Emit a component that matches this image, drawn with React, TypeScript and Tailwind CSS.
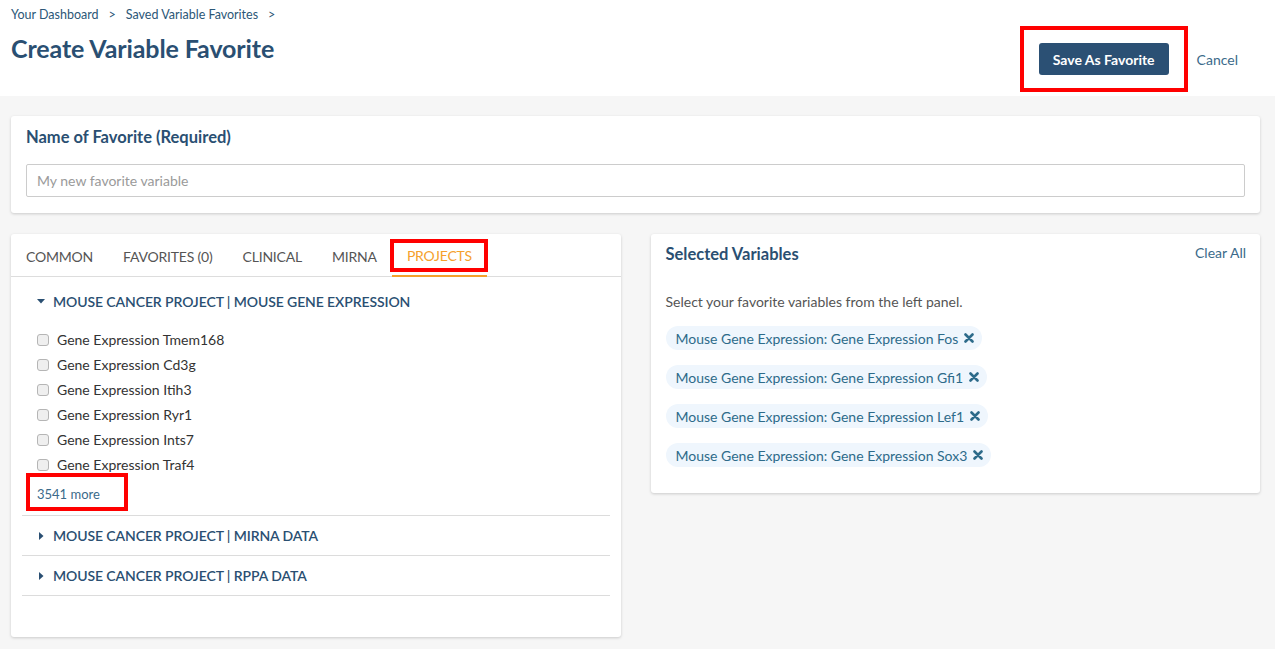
import { useState } from 'react';

const FONT = { fontFamily: 'Lato, "Open Sans", Arial, sans-serif' };

const TABS = ['Common', 'Favorites (0)', 'Clinical', 'miRNA', 'Projects'];

const GENES = [
  'Gene Expression Tmem168',
  'Gene Expression Cd3g',
  'Gene Expression Itih3',
  'Gene Expression Ryr1',
  'Gene Expression Ints7',
  'Gene Expression Traf4',
];

const SELECTED = [
  'Mouse Gene Expression: Gene Expression Fos',
  'Mouse Gene Expression: Gene Expression Gfi1',
  'Mouse Gene Expression: Gene Expression Lef1',
  'Mouse Gene Expression: Gene Expression Sox3',
];

const Caret = ({ open }: { open?: boolean }) => (
  <svg width="8" height="8" viewBox="0 0 8 8" className="shrink-0">
    {open
      ? <path d="M0 2h8L4 6.5z" fill="#2a4f72" />
      : <path d="M2 0v8l4.5-4z" fill="#2a4f72" />}
  </svg>
);

const RemoveIcon = () => (
  <svg width="10" height="10" viewBox="0 0 10 10" className="shrink-0">
    <path d="M1.5 1.5l7 7M8.5 1.5l-7 7" stroke="#2d6b8a" strokeWidth="2.6" strokeLinecap="round" />
  </svg>
);

const GroupRow = ({ title }: { title: string }) => (
  <div className="flex items-center gap-[8px] h-[40px] pl-[15px] border-b border-[#dcdcdc] text-[14px] text-[#2a4f72] font-semibold tracking-[-0.1px]">
    <Caret />
    <span>{title}</span>
  </div>
);

export default function App() {
  const [active, setActive] = useState('Projects');
  const [chips, setChips] = useState(SELECTED);

  return (
    <div className="min-h-[649px] bg-[#f6f6f6]" style={FONT}>
      <header className="bg-white h-[96px] flex justify-between pl-[11px] pr-[37px]">
        <div className="pt-[6px]">
          <nav className="flex gap-[10px] text-[12.5px] text-[#2c5777]">
            <span>Your Dashboard</span>
            <span>&gt;</span>
            <span>Saved Variable Favorites</span>
            <span>&gt;</span>
          </nav>
          <h1 className="mt-[5px] text-[25px] font-bold text-[#2a4f72] tracking-[-0.1px]">Create Variable Favorite</h1>
        </div>
        <div className="flex items-center gap-[9px] pt-[26px] pb-[4px]">
          <div className="border-[4px] border-[#ff0000] px-[15px] py-[13px]">
            <button className="h-[32px] px-[14px] rounded-[3px] bg-[#2b5074] text-white text-[14px] font-bold">
              Save As Favorite
            </button>
          </div>
          <button className="text-[14px] text-[#3b6a8a]">Cancel</button>
        </div>
      </header>

      <main className="pl-[11px] pr-[15px] pt-[20px] pb-[12px] flex flex-col gap-[21px]">
        <section className="bg-white rounded-[3px] shadow-[0_1px_3px_rgba(0,0,0,0.18)] px-[15px] pt-[9px] pb-[16px]">
          <h2 className="text-[16.5px] leading-[24px] font-bold text-[#2a4f72]">Name of Favorite (Required)</h2>
          <input
            className="mt-[15px] w-full h-[33px] border border-[#cccccc] rounded-[2px] px-[10px] text-[14px] text-[#333] placeholder:text-[#9a9a9a] outline-none"
            placeholder="My new favorite variable"
          />
        </section>

        <div className="grid grid-cols-2 gap-[30px] items-start">
          <section className="bg-white rounded-[3px] shadow-[0_1px_3px_rgba(0,0,0,0.18)] h-[403px]">
            <div className="flex border-b border-[#dddddd] h-[43px]">
              {TABS.map((tab) => {
                const on = tab === active;
                return (
                  <button
                    key={tab}
                    onClick={() => setActive(tab)}
                    className={
                      on
                        ? 'relative px-[15px] text-[14px] tracking-[-0.2px] uppercase text-[#f5a12c] border-b-[2px] border-[#f5a12c] -mb-[1px] pt-[2px]'
                        : 'relative px-[15px] text-[14px] tracking-[-0.2px] uppercase text-[#555555] pt-[2px]'
                    }
                  >
                    {tab}
                    {on && (
                      <span className="absolute left-[-2px] right-[-1px] top-[5px] bottom-[3px] border-[4px] border-[#ff0000]" />
                    )}
                  </button>
                );
              })}
            </div>

            <div className="px-[11px]">
              <div className="border-b border-[#dcdcdc] pb-[3px]">
                <div className="flex items-center gap-[8px] h-[48px] pl-[15px] text-[14px] text-[#2a4f72] font-semibold tracking-[-0.1px]">
                  <Caret open />
                  <span>MOUSE CANCER PROJECT | MOUSE GENE EXPRESSION</span>
                </div>
                <ul className="pl-[15px] mt-[2px]">
                  {GENES.map((g) => (
                    <li key={g} className="flex items-center gap-[8px] h-[25px] text-[14px] text-[#333333]">
                      <span className="w-[12px] h-[12px] rounded-[3px] border border-[#b5b5b5] bg-[#efefef]" />
                      <span>{g}</span>
                    </li>
                  ))}
                </ul>
                <div className="relative h-[34px] flex items-center pl-[15px] mt-[1px]">
                  <span className="text-[13px] text-[#3b6a8a]">3541 more</span>
                  <span className="absolute left-[4px] top-[-5px] w-[102px] h-[38px] border-[4px] border-[#ff0000]" />
                </div>
              </div>
              <GroupRow title="MOUSE CANCER PROJECT | MIRNA DATA" />
              <GroupRow title="MOUSE CANCER PROJECT | RPPA DATA" />
            </div>
          </section>

          <section className="bg-white rounded-[3px] shadow-[0_1px_3px_rgba(0,0,0,0.18)] px-[15px] pt-[7px] pb-[26px]">
            <div className="flex justify-between items-start">
              <h2 className="text-[16.5px] leading-[24px] font-bold text-[#2a4f72] pt-[1px]">Selected Variables</h2>
              <button className="text-[14px] text-[#3b6a8a] -mr-[1px] pt-[1px]">Clear All</button>
            </div>
            <p className="mt-[25px] text-[14px] text-[#555555]">Select your favorite variables from the left panel.</p>
            <div className="mt-[14px] flex flex-col items-start gap-[15px]">
              {chips.map((c) => (
                <span key={c} className="flex items-center gap-[6px] h-[24px] pl-[10px] pr-[8px] rounded-full bg-[#eff6fd] text-[14px] text-[#2d6b8a]">
                  {c}
                  <button onClick={() => setChips(chips.filter((x) => x !== c))} className="flex">
                    <RemoveIcon />
                  </button>
                </span>
              ))}
            </div>
          </section>
        </div>
      </main>
    </div>
  );
}
